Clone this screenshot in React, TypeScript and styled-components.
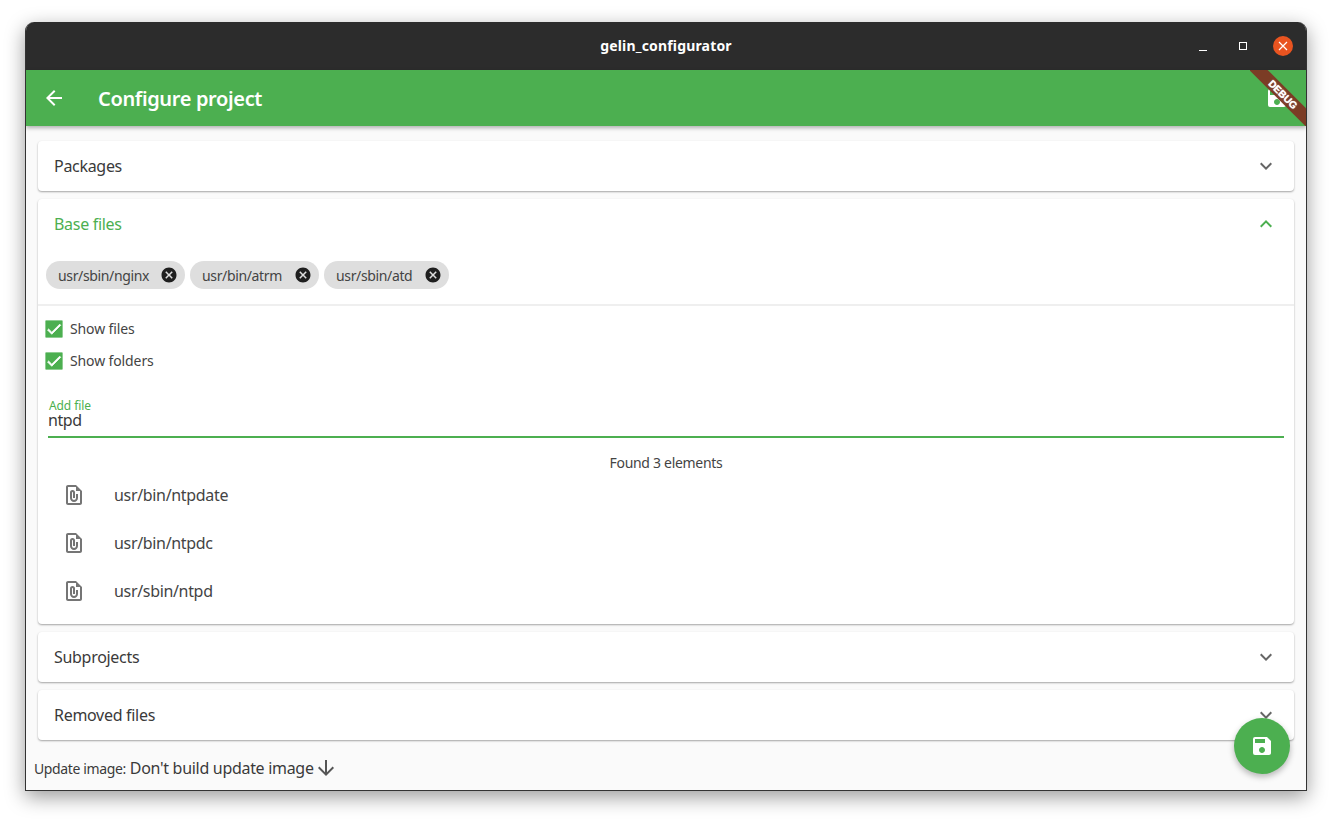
import React from "react";
import styled, {createGlobalStyle} from "styled-components";
import {MdArrowBack, MdArrowDownward, MdCancel, MdCheck, MdExpandLess, MdExpandMore, MdOutlineFilePresent, MdSave} from "react-icons/md";

const GREEN = "#4caf50";

const GlobalStyle = createGlobalStyle`
  html, body {
    margin: 0;
    padding: 0;
    background: #fff;
    overflow: hidden;
  }

  body {
    font-family: "Noto Sans", "Liberation Sans", sans-serif;
    color: #3a3a3a;
  }
`;

const Desktop = styled.div`
  width: 1332px;
  height: 819px;
  padding: 22px 25px 28px 25px;
  box-sizing: border-box;
`;

const Window = styled.div`
  position: relative;
  width: 1282px;
  height: 769px;
  display: flex;
  flex-direction: column;
  box-sizing: border-box;
  background: #fafafa;
  border: 1px solid #333;
  border-top: none;
  border-radius: 9px 9px 0 0;
  box-shadow: 0 6px 20px rgba(0, 0, 0, 0.4);
  overflow: hidden;
`;

const TitleBar = styled.header`
  flex: none;
  height: 48px;
  padding-bottom: 2px;
  box-sizing: border-box;
  display: flex;
  align-items: center;
  justify-content: center;
  position: relative;
  background: #2c2c2c;
  color: #fff;
  font-size: 14px;
  font-weight: 700;
  letter-spacing: 0.17px;
`;

const WindowControls = styled.div`
  position: absolute;
  right: 13px;
  top: 14px;
  display: flex;
  align-items: center;
  gap: 20px;
`;

const ControlBox = styled.div`
  width: 20px;
  height: 20px;
  display: flex;
  align-items: center;
  justify-content: center;
`;

const CloseBox = styled(ControlBox)`
  border-radius: 50%;
  background: #e95420;
`;

const AppBar = styled.div`
  flex: none;
  height: 56px;
  display: flex;
  align-items: center;
  position: relative;
  z-index: 2;
  padding: 0 17px 0 16px;
  background: ${GREEN};
  color: #fff;
  box-shadow: 0 2px 4px rgba(0, 0, 0, 0.3);
`;

const AppBarTitle = styled.h1`
  flex: 1;
  margin: 0 0 0 32px;
  font-size: 20px;
  font-weight: 600;
  letter-spacing: -0.35px;
`;

const DebugBanner = styled.div`
  position: absolute;
  top: 48px;
  right: 0;
  width: 56px;
  height: 56px;
  overflow: hidden;
  z-index: 3;

  span {
    position: absolute;
    top: 17.5px;
    left: -12px;
    width: 90px;
    height: 13px;
    line-height: 13px;
    text-align: center;
    transform: rotate(45deg);
    background: rgba(125, 55, 35, 0.96);
    color: #fff;
    font-family: "Liberation Sans", sans-serif;
    font-size: 10px;
    font-weight: 700;
    text-shadow: 0 0 1px #fff;
  }
`;

const Content = styled.main`
  flex: 1;
  display: flex;
  flex-direction: column;
  gap: 8px;
  padding: 15px 12px 0 12px;
  min-height: 0;
`;

const Panel = styled.section`
  background: #fff;
  border-radius: 4px;
  box-shadow: 0 1px 2px rgba(0, 0, 0, 0.35);
`;

const PanelHead = styled.div<{ $open?: boolean }>`
  height: 50px;
  display: flex;
  align-items: center;
  justify-content: space-between;
  padding: 0 16px;
  font-size: 16px;
  letter-spacing: -0.3px;
  color: ${p => (p.$open ? GREEN : "#3a3a3a")};

  svg {
    color: ${p => (p.$open ? GREEN : "#666")};
  }
`;

const ChipRow = styled.div`
  display: flex;
  gap: 5px;
  padding: 12px 8px 15px 8px;
  border-bottom: 2px solid #efefef;
`;

const Chip = styled.div<{ $width: number }>`
  width: ${p => p.$width}px;
  height: 28px;
  box-sizing: border-box;
  display: flex;
  align-items: center;
  justify-content: space-between;
  padding: 0 7px 0 12px;
  border-radius: 14px;
  background: #dedede;
  font-size: 14px;
  letter-spacing: -0.36px;
  color: #444;

  svg {
    color: #1f1f1f;
  }
`;

const Options = styled.div`
  display: flex;
  flex-direction: column;
  gap: 13px;
  padding: 13px 7px 0 7px;
`;

const CheckRow = styled.label`
  display: flex;
  align-items: center;
  gap: 7px;
  font-size: 14px;
  letter-spacing: -0.12px;
  color: #444;
`;

const CheckBox = styled.span`
  width: 18px;
  height: 18px;
  display: flex;
  align-items: center;
  justify-content: center;
  border-radius: 1px;
  background: ${GREEN};
  color: #fff;

  svg {
    stroke: currentColor;
    stroke-width: 1;
  }
`;

const Field = styled.div`
  margin: 28px 10px 0 10px;
  padding-top: 2px;
  height: 40px;
  border-bottom: 2px solid ${GREEN};
  box-sizing: border-box;
`;

const FieldLabel = styled.div`
  padding-left: 1px;
  font-size: 12px;
  line-height: 12px;
  letter-spacing: -0.1px;
  color: ${GREEN};
`;

const FieldValue = styled.div`
  font-size: 16px;
  line-height: 16px;
  letter-spacing: -0.4px;
  color: #3a3a3a;
`;

const FoundLabel = styled.div`
  margin-top: 16px;
  text-align: center;
  font-size: 14px;
  line-height: 18px;
  letter-spacing: -0.3px;
  color: #444;
`;

const FileList = styled.ul`
  list-style: none;
  margin: -1px 0 0 0;
  padding: 0 0 9px 0;
`;

const FileRow = styled.li`
  height: 48px;
  display: flex;
  align-items: center;
  gap: 28px;
  padding-left: 24px;
  font-size: 16px;
  letter-spacing: -0.33px;
  color: #444;

  svg {
    color: #757575;
  }
`;

const Footer = styled.footer`
  flex: none;
  height: 49px;
  padding: 5px 0 0 8px;
  box-sizing: border-box;
  display: flex;
  align-items: center;
  gap: 4px;
  font-size: 14px;
  letter-spacing: -0.38px;
  color: #3a3a3a;
`;

const FooterValue = styled.span`
  display: flex;
  align-items: center;
  font-size: 16px;
  letter-spacing: -0.3px;

  svg {
    color: #555;
  }
`;

const Fab = styled.button`
  position: absolute;
  right: 16px;
  bottom: 16px;
  width: 56px;
  height: 56px;
  display: flex;
  align-items: center;
  justify-content: center;
  padding: 0;
  border: none;
  border-radius: 50%;
  background: ${GREEN};
  color: #fff;
  box-shadow: 0 3px 6px rgba(0, 0, 0, 0.28);
`;

function Collapsed(props: { title: string }) {
    return (
        <Panel>
            <PanelHead>
                {props.title}
                <MdExpandMore size={24}/>
            </PanelHead>
        </Panel>
    );
}

function FileItem(props: { path: string }) {
    return (
        <FileRow>
            <MdOutlineFilePresent size={24}/>
            {props.path}
        </FileRow>
    );
}

function App() {
    return (
        <Desktop>
            <GlobalStyle/>
            <Window>
                <TitleBar>
                    gelin_configurator
                    <WindowControls>
                        <ControlBox>
                            <svg width="10" height="10" viewBox="0 0 10 10"><path d="M1 9.5h8" stroke="#fff" strokeWidth="1"/></svg>
                        </ControlBox>
                        <ControlBox>
                            <svg width="10" height="10" viewBox="0 0 10 10"><rect x="1.5" y="1.5" width="7" height="7" fill="none" stroke="#fff"/></svg>
                        </ControlBox>
                        <CloseBox>
                            <svg width="10" height="10" viewBox="0 0 10 10"><path d="M1 1l8 8M9 1l-8 8" stroke="#fff" strokeWidth="1.2"/></svg>
                        </CloseBox>
                    </WindowControls>
                </TitleBar>
                <AppBar>
                    <MdArrowBack size={24}/>
                    <AppBarTitle>Configure project</AppBarTitle>
                    <MdSave size={24}/>
                </AppBar>
                <DebugBanner><span>DEBUG</span></DebugBanner>
                <Content>
                    <Collapsed title="Packages"/>
                    <Panel>
                        <PanelHead $open>
                            Base files
                            <MdExpandLess size={24}/>
                        </PanelHead>
                        <ChipRow>
                            <Chip $width={139}>usr/sbin/nginx <MdCancel size={18}/></Chip>
                            <Chip $width={129}>usr/bin/atrm <MdCancel size={18}/></Chip>
                            <Chip $width={125}>usr/sbin/atd <MdCancel size={18}/></Chip>
                        </ChipRow>
                        <Options>
                            <CheckRow><CheckBox><MdCheck size={18}/></CheckBox>Show files</CheckRow>
                            <CheckRow><CheckBox><MdCheck size={18}/></CheckBox>Show folders</CheckRow>
                        </Options>
                        <Field>
                            <FieldLabel>Add file</FieldLabel>
                            <FieldValue>ntpd</FieldValue>
                        </Field>
                        <FoundLabel>Found 3 elements</FoundLabel>
                        <FileList>
                            <FileItem path="usr/bin/ntpdate"/>
                            <FileItem path="usr/bin/ntpdc"/>
                            <FileItem path="usr/sbin/ntpd"/>
                        </FileList>
                    </Panel>
                    <Collapsed title="Subprojects"/>
                    <Collapsed title="Removed files"/>
                </Content>
                <Footer>
                    Update image:
                    <FooterValue>Don't build update image <MdArrowDownward size={24}/></FooterValue>
                </Footer>
                <Fab><MdSave size={24}/></Fab>
            </Window>
        </Desktop>
    );
}

export default App;
